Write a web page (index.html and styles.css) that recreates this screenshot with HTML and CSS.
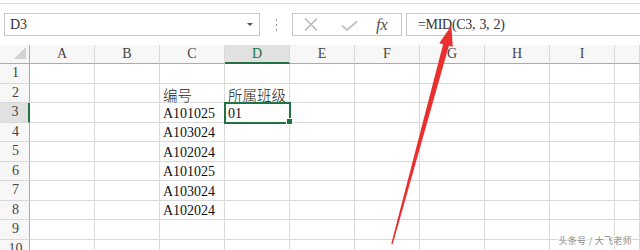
FILE: index.html
```html
<!DOCTYPE html>
<html>
<head>
<meta charset="utf-8">
<link rel="stylesheet" href="styles.css">
</head>
<body>
<div class="page">
  <div class="topline"></div>
  <div class="fbar">
    <div class="namebox"><span class="nb-text">D3</span><span class="nb-arrow"></span></div>
    <div class="dots"><i></i><i></i><i></i></div>
    <div class="fbtns">
      <svg class="ico-x" width="14" height="13" viewBox="0 0 14 13"><path d="M1 0.5 L13 12.5 M13 0.5 L1 12.5" stroke="#b4b4b4" stroke-width="1.4" fill="none"/></svg>
      <svg class="ico-ok" width="17" height="10" viewBox="0 0 17 10"><path d="M1 4.5 L6 9 L16 0.5" stroke="#c4c4c4" stroke-width="2" fill="none"/></svg>
      <span class="fx">fx</span>
    </div>
    <div class="finput">=MID(C3, 3, 2)</div>
  </div>
  <div class="grid">
    <div class="hd corner"><span class="tri"></span></div>
    <div class="hd col">A</div><div class="hd col">B</div><div class="hd col">C</div><div class="hd col sel">D</div><div class="hd col">E</div><div class="hd col">F</div><div class="hd col">G</div><div class="hd col">H</div><div class="hd col">I</div><div class="hd col"></div>

    <div class="rh">1</div><div class="c"></div><div class="c"></div><div class="c"></div><div class="c"></div><div class="c"></div><div class="c"></div><div class="c"></div><div class="c"></div><div class="c"></div><div class="c"></div>

    <div class="rh">2</div><div class="c"></div><div class="c"></div><div class="c cjk">编号</div><div class="c cjk">所属班级</div><div class="c"></div><div class="c"></div><div class="c"></div><div class="c"></div><div class="c"></div><div class="c"></div>

    <div class="rh rsel">3</div><div class="c"></div><div class="c"></div><div class="c">A101025</div><div class="c active">01</div><div class="c"></div><div class="c"></div><div class="c"></div><div class="c"></div><div class="c"></div><div class="c"></div>

    <div class="rh">4</div><div class="c"></div><div class="c"></div><div class="c">A103024</div><div class="c"></div><div class="c"></div><div class="c"></div><div class="c"></div><div class="c"></div><div class="c"></div><div class="c"></div>

    <div class="rh">5</div><div class="c"></div><div class="c"></div><div class="c">A102024</div><div class="c"></div><div class="c"></div><div class="c"></div><div class="c"></div><div class="c"></div><div class="c"></div><div class="c"></div>

    <div class="rh">6</div><div class="c"></div><div class="c"></div><div class="c">A101025</div><div class="c"></div><div class="c"></div><div class="c"></div><div class="c"></div><div class="c"></div><div class="c"></div><div class="c"></div>

    <div class="rh">7</div><div class="c"></div><div class="c"></div><div class="c">A103024</div><div class="c"></div><div class="c"></div><div class="c"></div><div class="c"></div><div class="c"></div><div class="c"></div><div class="c"></div>

    <div class="rh">8</div><div class="c"></div><div class="c"></div><div class="c">A102024</div><div class="c"></div><div class="c"></div><div class="c"></div><div class="c"></div><div class="c"></div><div class="c"></div><div class="c"></div>

    <div class="rh">9</div><div class="c"></div><div class="c"></div><div class="c"></div><div class="c"></div><div class="c"></div><div class="c"></div><div class="c"></div><div class="c"></div><div class="c"></div><div class="c"></div>

    <div class="rh">10</div><div class="c"></div><div class="c"></div><div class="c"></div><div class="c"></div><div class="c"></div><div class="c"></div><div class="c"></div><div class="c"></div><div class="c"></div><div class="c"></div>
  </div>
  <div class="watermark">头条号 / 大飞老师</div>
  <svg class="arrow" width="640" height="250" viewBox="0 0 640 250">
    <polygon fill="#ea2f2f" points="451.3,25.7 452.8,46.8 448.9,45.8 392.7,244.2 391.3,243.8 443.1,44.2 439.2,43.2"/>
  </svg>
</div>
</body>
</html>
```

FILE: styles.css
```css
html, body {
  margin: 0;
  padding: 0;
  background: #ffffff;
}
.page {
  position: relative;
  width: 640px;
  height: 250px;
  overflow: hidden;
  font-family: "Liberation Serif", "Noto Sans CJK SC", serif;
  color: #222;
}
.topline {
  height: 3px;
  border-bottom: 1px solid #dddddd;
}
.fbar {
  display: flex;
  margin-top: 9px;
  height: 23px;
  padding-left: 4px;
}
.namebox {
  width: 256px;
  box-sizing: border-box;
  border: 1px solid #c8c8c8;
  display: flex;
  align-items: center;
  justify-content: space-between;
  padding: 0 6px 0 5px;
}
.nb-text {
  font-size: 14px;
  color: #333;
}
.nb-arrow {
  width: 0;
  height: 0;
  border-left: 3px solid transparent;
  border-right: 3px solid transparent;
  border-top: 3px solid #555;
}
.dots {
  width: 32px;
  display: flex;
  flex-direction: column;
  align-items: center;
  justify-content: center;
  gap: 3px;
}
.dots i {
  width: 1px;
  height: 2px;
  background: #9a9a9a;
}
.fbtns {
  width: 110px;
  box-sizing: border-box;
  border: 1px solid #c8c8c8;
  display: flex;
  align-items: center;
  padding-left: 11px;
}
.ico-x { margin-right: 23px; }
.ico-ok { margin-right: 18px; margin-top: 3px; }
.fx {
  font-family: "Liberation Serif", serif;
  font-style: italic;
  font-size: 17px;
  color: #555;
  letter-spacing: -0.5px;
}
.finput {
  flex: 1;
  margin-left: 4px;
  box-sizing: border-box;
  border: 1px solid #c8c8c8;
  border-right: none;
  display: flex;
  align-items: center;
  padding-left: 11px;
  font-size: 14px;
  letter-spacing: -0.3px;
  word-spacing: 1px;
  color: #333;
}
.grid {
  margin-top: 9px;
  display: grid;
  grid-template-columns: 30px repeat(9, 65px) 1fr;
  grid-template-rows: 19px repeat(10, 19.5px);
}
.hd, .rh, .c {
  box-sizing: border-box;
  border-right: 1px solid #d9d9d9;
  border-bottom: 1px solid #d9d9d9;
}
.hd {
  background: #f7f7f7;
  border-bottom-color: #ababab;
  font-size: 14px;
  color: #444;
  display: flex;
  align-items: center;
  justify-content: center;
}
.corner {
  position: relative;
  border-right-color: #ababab;
}
.tri {
  position: absolute;
  right: 3px;
  bottom: 4px;
  width: 0;
  height: 0;
  border-left: 12px solid transparent;
  border-bottom: 12px solid #d2d2d2;
}
.hd.sel {
  background: #e1e1e1;
  border-bottom: 2px solid #217346;
  color: #217346;
}
.rh {
  background: #f7f7f7;
  border-right-color: #ababab;
  font-size: 14px;
  color: #444;
  display: flex;
  align-items: center;
  justify-content: center;
  padding-left: 2px;
}
.rh.rsel {
  background: #e1e1e1;
  border-right: 2px solid #217346;
}
.c {
  font-size: 14px;
  letter-spacing: 0;
  color: #111;
  display: flex;
  align-items: flex-end;
  padding: 0 0 0 3px;
  white-space: nowrap;
  line-height: 16px;
}
.c.cjk {
  font-family: "Noto Sans CJK SC", sans-serif;
  font-size: 14.5px;
  letter-spacing: 0;
  font-weight: 300;
  line-height: 15px;
  padding-bottom: 0;
  color: #222;
}
.c.active {
  position: relative;
  outline: 2px solid #217346;
  outline-offset: -1px;
  z-index: 2;
}
.c.active::after {
  content: "";
  position: absolute;
  right: -4px;
  bottom: -3px;
  width: 5px;
  height: 5px;
  background: #217346;
  border: 1px solid #fff;
}
.watermark {
  position: absolute;
  right: 8px;
  bottom: 4px;
  font-family: "Noto Sans CJK SC", sans-serif;
  font-size: 9px;
  line-height: 10px;
  letter-spacing: 0.3px;
  color: #8a8a8a;
  background: rgba(255,255,255,0.6);
}
.arrow {
  position: absolute;
  left: 0;
  top: 0;
  pointer-events: none;
  z-index: 5;
}
```
